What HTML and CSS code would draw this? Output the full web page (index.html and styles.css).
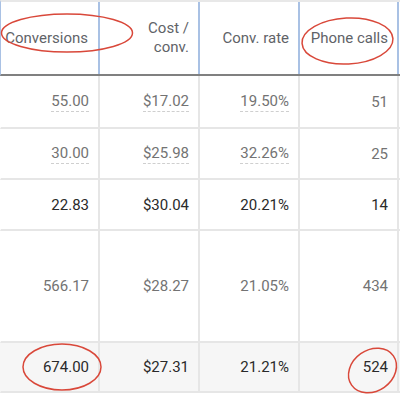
FILE: index.html
```html
<!DOCTYPE html>
<html>
<head>
<meta charset="utf-8">
<link rel="stylesheet" href="styles.css">
</head>
<body>
<div class="page">
  <div class="table">
    <div class="row head">
      <div class="cell"><span class="clip">Conversions</span></div>
      <div class="cell"><span>Cost /<br>conv.</span></div>
      <div class="cell"><span>Conv. rate</span></div>
      <div class="cell"><span>Phone calls</span></div>
    </div>
    <div class="row body r1 muted">
      <div class="cell"><span class="dash">55.00</span></div>
      <div class="cell"><span class="dash">$17.02</span></div>
      <div class="cell"><span class="dash">19.50%</span></div>
      <div class="cell"><span>51</span></div>
    </div>
    <div class="row body r2 muted">
      <div class="cell"><span class="dash">30.00</span></div>
      <div class="cell"><span class="dash">$25.98</span></div>
      <div class="cell"><span class="dash">32.26%</span></div>
      <div class="cell"><span>25</span></div>
    </div>
    <div class="row body r3">
      <div class="cell"><span>22.83</span></div>
      <div class="cell"><span>$30.04</span></div>
      <div class="cell"><span>20.21%</span></div>
      <div class="cell"><span>14</span></div>
    </div>
    <div class="row body r4 muted">
      <div class="cell"><span>566.17</span></div>
      <div class="cell"><span>$28.27</span></div>
      <div class="cell"><span>21.05%</span></div>
      <div class="cell"><span>434</span></div>
    </div>
    <div class="row body total">
      <div class="cell"><span>674.00</span></div>
      <div class="cell"><span>$27.31</span></div>
      <div class="cell"><span>21.21%</span></div>
      <div class="cell"><span>524</span></div>
    </div>
  </div>
  <svg class="marks" width="400" height="395" viewBox="0 0 400 395">
    <ellipse cx="67" cy="33" rx="65.5" ry="19" />
    <ellipse cx="347.5" cy="41" rx="45.5" ry="23" transform="rotate(-3 347.5 41)" />
    <ellipse cx="62" cy="367" rx="39" ry="23" />
    <ellipse cx="372.5" cy="370.5" rx="25.5" ry="20.5" transform="rotate(-35 372.5 370.5)" />
  </svg>
</div>
</body>
</html>
```
FILE: styles.css
```css
html, body {
  margin: 0;
  padding: 0;
  background: #ffffff;
}

.page {
  position: relative;
  width: 400px;
  height: 395px;
  overflow: hidden;
  font-family: Roboto, "Liberation Sans", Arial, sans-serif;
  font-size: 15px;
  color: #2a2a2a;
}

.table {
  width: 400px;
}

.row {
  display: grid;
  grid-template-columns: 99px 100px 100px 99px;
  border-left: 1px solid transparent;
  box-sizing: border-box;
}

.cell {
  box-sizing: border-box;
  display: flex;
  align-items: center;
  justify-content: flex-end;
  text-align: right;
  padding: 0 9px 0 3px;
  border-right: 2px solid #e6e6e6;
  white-space: nowrap;
}

.head {
  height: 76px;
  border-top: 2px solid #e8e8e8;
  border-bottom: 2px solid #808080;
  border-left-color: #a9c1e4;
  color: #5f6368;
  line-height: 19px;
}

.head .cell {
  border-right-color: #a9c1e4;
}

.head .cell:first-child {
  justify-content: flex-start;
}

.clip {
  display: block;
  width: 84px;
  overflow: hidden;
  white-space: nowrap;
}

.body {
  border-bottom: 2px solid #e6e6e6;
}

.r1 { height: 53px; }
.r2 { height: 51px; }
.r3 { height: 51px; }
.r4 { height: 112px; }
.total {
  height: 50px;
  background: #f6f6f6;
}

.muted {
  color: #737373;
}

.dash {
  display: inline-block;
  line-height: 15px;
  padding-bottom: 2px;
  border-bottom: 1px dashed #cfcfcf;
  margin-bottom: -3px;
}

.marks {
  position: absolute;
  left: 0;
  top: 0;
  pointer-events: none;
}

.marks ellipse {
  fill: none;
  stroke: #d9483a;
  stroke-width: 1.5;
}
```
